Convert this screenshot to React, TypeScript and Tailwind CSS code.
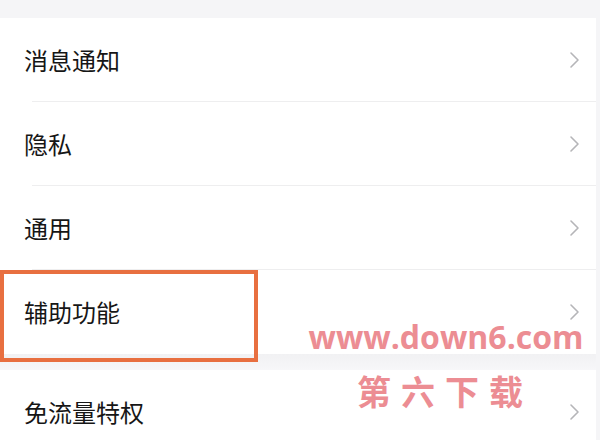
const rows = ["消息通知", "隐私", "通用", "辅助功能"];

function Chevron() {
  return (
    <svg width="12" height="18" viewBox="0 0 12 18" fill="none">
      <path d="M3 2l7 7-7 7" stroke="#b5b5b8" strokeWidth="1.6" strokeLinecap="round" strokeLinejoin="round" />
    </svg>
  );
}

function Row({ label, divider }: { label: string; divider: boolean }) {
  return (
    <div className="relative flex h-[84px] items-center justify-between bg-white pl-[24px] pr-[16px]">
      <span className="text-[24px] text-[#161616]">{label}</span>
      <Chevron />
      {divider && <div className="absolute bottom-0 left-[32px] right-0 h-px bg-[#eeeeef]" />}
    </div>
  );
}

export default function App() {
  return (
    <div
      className="relative h-[440px] w-[600px] overflow-hidden bg-[#f5f5f7] pr-[4px]"
      style={{ fontFamily: '"Noto Sans CJK SC", "Noto Sans", sans-serif' }}
    >
      <div className="h-[18px]" />
      {rows.map((r, i) => (
        <Row key={r} label={r} divider={i < 3} />
      ))}
      <div className="h-[16px] bg-gradient-to-b from-[#f1f1f3] to-[#f7f7f9]" />
      <Row label="免流量特权" divider={false} />

      {/* highlight box */}
      <div className="absolute left-0 top-[270px] h-[92px] w-[258px] border-[4px] border-[#e86f40]" />

      {/* watermark */}
      <div className="absolute left-[300px] top-[321px] flex w-[292px] flex-col items-center">
        <span
          className="whitespace-nowrap text-[32px] font-bold leading-none text-[#ec8d93]"
          style={{ fontFamily: '"Open Sans", sans-serif' }}
        >
          www.down6.com
        </span>
        <span className="mt-[21px] pr-[2px] text-[34px] font-bold leading-none tracking-[10px] text-[#ec8d93]">
          第六下载
        </span>
      </div>
    </div>
  );
}
